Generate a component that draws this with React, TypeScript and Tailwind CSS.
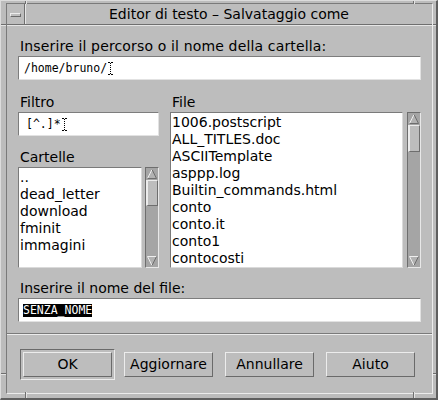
import React from "react";

function IBeam() {
  return (
    <svg width="5" height="13" viewBox="0 0 5 13" className="ml-[1px] shrink-0">
      <path d="M0 0.5h2M3 0.5h2M0 12.5h2M3 12.5h2" stroke="#000" strokeWidth="1" />
      <path d="M2.5 1v11" stroke="#000" strokeWidth="1" strokeDasharray="1 1" />
    </svg>
  );
}

function Arrow({ up }: { up: boolean }) {
  return (
    <svg width="12" height="12" viewBox="0 0 12 12" className="shrink-0">
      {up ? (
        <g>
          <polygon points="6,1.5 1.5,10.5 10.5,10.5" fill="#b2b2b2" />
          <path d="M6 1.5L1.5 10.5" stroke="#efefef" strokeWidth="1" fill="none" />
          <path d="M6 1.5L10.5 10.5H1.5" stroke="#6e6e6e" strokeWidth="1" fill="none" />
        </g>
      ) : (
        <g>
          <polygon points="1.5,1.5 10.5,1.5 6,10.5" fill="#b2b2b2" />
          <path d="M10.5 1.5H1.5L6 10.5" stroke="#efefef" strokeWidth="1" fill="none" />
          <path d="M10.5 1.5L6 10.5" stroke="#6e6e6e" strokeWidth="1" fill="none" />
        </g>
      )}
    </svg>
  );
}

function Scrollbar({ thumb }: { thumb: string }) {
  return (
    <div className="flex w-[14px] shrink-0 flex-col border border-t-[#6e6e6e] border-l-[#6e6e6e] border-b-[#e8e8e8] border-r-[#e8e8e8] bg-[#a5a5a5]">
      <Arrow up={true} />
      <div className="flex flex-1 flex-col">
        <div
          className={
            thumb +
            " border-t border-l-2 border-b border-r border-t-[#ececec] border-l-[#ececec] border-b-[#6e6e6e] border-r-[#6e6e6e] bg-[#bdbdbd]"
          }
        />
      </div>
      <Arrow up={false} />
    </div>
  );
}

function Button({ label }: { label: string }) {
  return (
    <div className="flex h-[25px] w-[89px] items-center justify-center border border-t-[#ececec] border-l-[#ececec] border-b-[#6a6a6a] border-r-[#6a6a6a] text-[14px] leading-[17px] text-black">
      {label}
    </div>
  );
}

export default function App() {
  const sans = "font-['DejaVu_Sans',sans-serif]";
  const mono = "font-['DejaVu_Sans_Mono',monospace]";
  const inputBox =
    "flex h-[24px] items-center border border-t-[#7d7d7d] border-l-[#7d7d7d] border-b-[#e2e2e2] border-r-[#e2e2e2] bg-white";
  const listBox =
    "border border-t-[#7a7a7a] border-l-[#7a7a7a] border-b-[#dadada] border-r-[#dadada] bg-white pt-[1px] pl-[1px] text-[14px] leading-[17px] text-black";
  const label = "h-[17px] text-[14px] leading-[17px] text-black";

  const files = [
    "1006.postscript",
    "ALL_TITLES.doc",
    "ASCIITemplate",
    "asppp.log",
    "Builtin_commands.html",
    "conto",
    "conto.it",
    "conto1",
    "contocosti",
  ];
  const folders = ["..", "dead_letter", "download", "fminit", "immagini"];

  return (
    <div className={sans + " relative flex h-[400px] w-[438px] flex-col overflow-hidden border-t border-l border-b-2 border-r-2 border-t-[#dcdcdc] border-l-[#dcdcdc] border-b-[#5f5f5f] border-r-[#5f5f5f] bg-[#bcbcbc] pt-[2px] pl-[5px] pr-[3px] pb-[4px]"}>
      {/* resize corner ticks */}
      <div className="absolute left-[24px] top-0 h-[3px] w-[2px] border-l border-r border-l-[#6f6f6f] border-r-[#e4e4e4]" />
      <div className="absolute left-[412px] top-0 h-[3px] w-[2px] border-l border-r border-l-[#6f6f6f] border-r-[#e4e4e4]" />
      <div className="absolute left-[24px] bottom-0 h-[6px] w-[2px] border-l border-r border-l-[#6f6f6f] border-r-[#e4e4e4]" />
      <div className="absolute left-[412px] bottom-0 h-[6px] w-[2px] border-l border-r border-l-[#6f6f6f] border-r-[#e4e4e4]" />
      <div className="absolute left-0 top-[23px] h-[2px] w-[5px] border-t border-b border-t-[#6f6f6f] border-b-[#e4e4e4]" />
      <div className="absolute left-0 top-[372px] h-[2px] w-[5px] border-t border-b border-t-[#6f6f6f] border-b-[#e4e4e4]" />
      <div className="absolute right-0 top-[23px] h-[2px] w-[3px] border-t border-b border-t-[#6f6f6f] border-b-[#e4e4e4]" />
      <div className="absolute right-0 top-[372px] h-[2px] w-[3px] border-t border-b border-t-[#6f6f6f] border-b-[#e4e4e4]" />

      <div className="flex flex-1 flex-col border border-t-[#7a7a7a] border-l-[#7a7a7a] border-b-[#ececec] border-r-[#ececec] bg-[#bdbdbd]">
        {/* title bar */}
        <div className="flex h-[21px] shrink-0 border-b border-b-[#6f6f6f]">
          <div className="flex w-[18px] shrink-0 items-center justify-center border-r border-r-[#6f6f6f]">
            <div className="mt-[1px] h-[4px] w-[11px] border-t border-b border-l border-r border-t-[#ececec] border-l-[#ececec] border-b-[#6a6a6a] border-r-[#6a6a6a] bg-[#bdbdbd]" />
          </div>
          <div className="flex flex-1 items-center justify-center border-l border-l-[#e6e6e6] text-[14px] leading-[17px] text-black">
            Editor di testo – Salvataggio come
          </div>
        </div>

        {/* content */}
        <div className="flex flex-1 flex-col border-t border-t-[#e6e6e6]">
          <div className="flex flex-col px-[11px] pt-[12px] pb-[11px]">
            <div className={label + " pl-[2px] tracking-[0.15px]"}>Inserire il percorso o il nome della cartella:</div>
            <div className={inputBox + " mt-[1px] pl-[5px]"}>
              <span className={mono + " text-[11.5px] leading-[14px] text-black"}>/home/bruno/</span>
              <IBeam />
            </div>

            <div className="mt-[14px] flex">
              <div className="flex w-[141px] shrink-0 flex-col">
                <div className={label + " pl-[2px]"}>Filtro</div>
                <div className={inputBox + " mt-[1px] pl-[7px]"}>
                  <span className={mono + " text-[11.5px] leading-[14px] text-black"}>[^.]*</span>
                  <IBeam />
                </div>
                <div className={label + " mt-[13px] pl-[2px]"}>Cartelle</div>
                <div className="mt-[1px] flex h-[101px] gap-[3px]">
                  <div className={listBox + " flex-1"}>
                    {folders.map((f) => (
                      <div key={f} className="h-[17px] whitespace-nowrap">
                        {f}
                      </div>
                    ))}
                  </div>
                  <Scrollbar thumb="h-[26px]" />
                </div>
              </div>

              <div className="ml-[11px] flex flex-1 flex-col">
                <div className={label + " pl-[2px]"}>File</div>
                <div className="mt-[1px] flex h-[156px] gap-[4px]">
                  <div className={listBox + " flex-1 overflow-hidden"}>
                    {files.map((f) => (
                      <div key={f} className="h-[17px] whitespace-nowrap">
                        {f}
                      </div>
                    ))}
                  </div>
                  <Scrollbar thumb="h-[27px]" />
                </div>
              </div>
            </div>

            <div className={label + " mt-[12px] pl-[2px]"}>Inserire il nome del file:</div>
            <div className={inputBox + " mt-[1px] pl-[4px]"}>
              <span className={mono + " inline-block bg-black pb-[1px] text-[11.5px] leading-[12px] text-white"}>SENZA_NOME</span>
            </div>
          </div>

          {/* separator */}
          <div className="h-[2px] shrink-0 border-t border-b border-t-[#7a7a7a] border-b-[#ececec]" />

          {/* buttons */}
          <div className="flex flex-1 items-center gap-[12px] px-[16px]">
            <div className="-m-[3px] border border-t-[#6a6a6a] border-l-[#6a6a6a] border-b-[#ececec] border-r-[#ececec] p-[2px]">
              <Button label="OK" />
            </div>
            <Button label="Aggiornare" />
            <Button label="Annullare" />
            <Button label="Aiuto" />
          </div>
        </div>
      </div>
    </div>
  );
}
